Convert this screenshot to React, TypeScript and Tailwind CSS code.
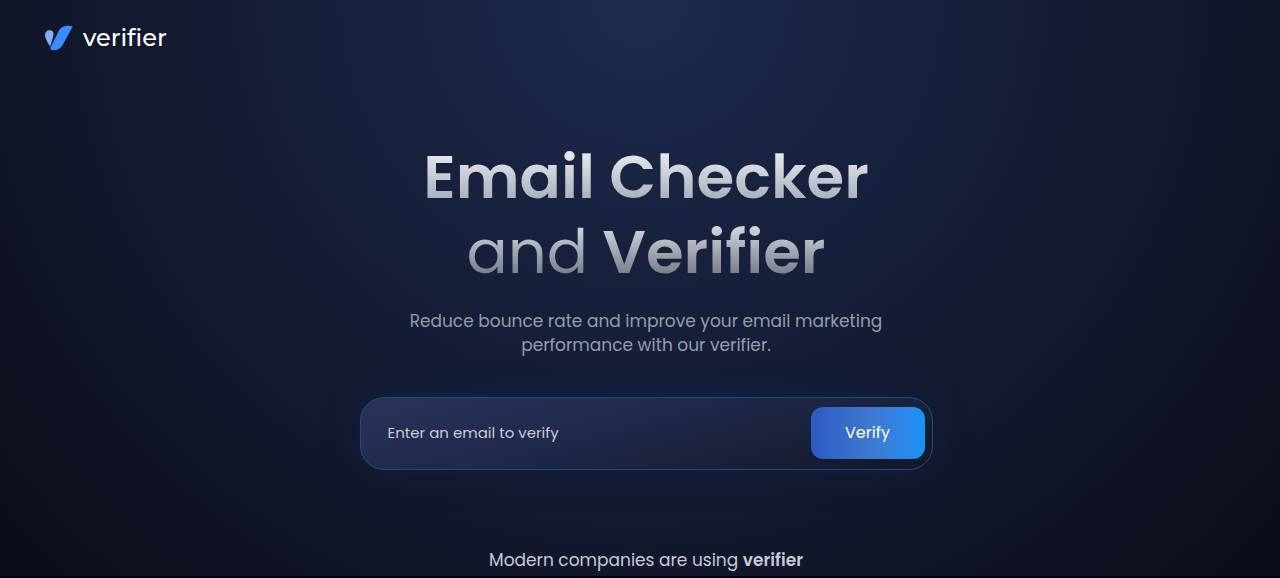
function Logo() {
  return (
    <a href="/" className="flex w-fit items-center gap-2.5 text-white">
      <svg viewBox="0 0 29 26" className="h-[26px] w-[29px]" aria-hidden="true">
        <path d="M1 10.500C1 7 3 5.200 5.600 5.200 8.400 5.200 9.900 6.800 9.500 9.500 9 12.500 7.500 17.500 6.300 21.500 4 18.500 1.500 14 1 10.500Z" fill="#7db0fb" />
        <path d="M28.800 1.200C24.500 .2 20.500 .6 18 2.200 15.500 3.800 14.200 6.500 13 9.500L6.500 22.500C5.700 24.700 7.500 25.500 10.500 25.200 14.500 25 17 23 19 19.500Z" fill="#3a8cff" />
      </svg>
      <span className="font-['Montserrat','Poppins','Inter',sans-serif] text-2xl font-medium">verifier</span>
    </a>
  );
}

function VerifyForm() {
  return (
    <form
      onSubmit={(event) => event.preventDefault()}
      className="mt-10 flex w-full max-w-[573px] items-center rounded-3xl border border-[#264882] bg-linear-165 from-[#29335a] via-[#20284a] via-45% to-[#111828] pt-[9px] pr-[7px] pb-[10px] pl-2 shadow-[0_0_40px_rgba(25,55,120,0.2)]"
    >
      <input
        type="email"
        aria-label="Email to verify"
        placeholder="Enter an email to verify"
        className="min-w-0 flex-1 bg-transparent px-[19px] text-[15px] text-[#c9cdda] outline-none placeholder:text-[#c9cdda]"
      />
      <button
        type="submit"
        className="h-[52px] w-[114px] shrink-0 rounded-xl bg-linear-to-r from-[#2d5abf] via-[#3d77cf] to-[#1792f8] text-base text-white"
      >
        Verify
      </button>
    </form>
  );
}

export default function App() {
  return (
    <div className="min-h-screen border-b-2 border-[#090116] bg-[#0a0d1a] bg-[radial-gradient(ellipse_56%_120%_at_50%_0%,#1d2b4d_0%,#161f3b_45%,#111629_85%,#0a0d1a_120%)] font-['Poppins','Inter','Liberation_Sans',sans-serif]">
      <header className="px-11 pt-[22px]">
        <Logo />
      </header>
      <main className="flex flex-col items-center pt-[85px] pl-3 text-center">
        <h1 className="text-[61px] leading-[75px] font-semibold text-transparent">
          <span className="block bg-linear-to-b from-[#fafafc] to-[#989fad] bg-clip-text">Email Checker</span>
          <span className="block bg-linear-to-b from-[#eeeff3] to-[#606473] bg-clip-text">
            <span className="font-normal">and</span> Verifier
          </span>
        </h1>
        <p className="mt-5 max-w-[500px] text-[17px] leading-6 text-[#969cad]">
          Reduce bounce rate and improve your email marketing performance with our verifier.
        </p>
        <VerifyForm />
        <p className="mt-[78px] text-[17px] leading-6 text-[#c6cad6]">
          Modern companies are using <strong className="font-semibold">verifier</strong>
        </p>
      </main>
    </div>
  );
}
